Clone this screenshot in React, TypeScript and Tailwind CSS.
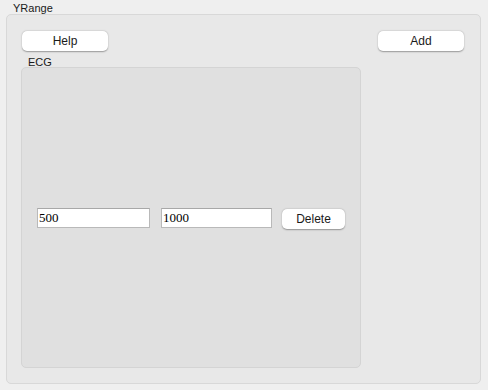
import React from "react";

const Button = ({ label, className = "" }: { label: string; className?: string }) => (
  <button
    className={`h-[20px] rounded-[5px] bg-white text-[12px] leading-[20px] text-[#1a1a1a] shadow-[0_0.5px_1.5px_rgba(0,0,0,0.35)] ${className}`}
    style={{ fontFamily: '"Liberation Sans", Arial, sans-serif' }}
  >
    {label}
  </button>
);

const Field = ({ value, className = "" }: { value: string; className?: string }) => (
  <input
    defaultValue={value}
    className={`h-[20px] border border-[#b9b9b9] border-t-[#a8a8a8] bg-white px-[1px] text-[13px] text-black outline-none ${className}`}
    style={{ fontFamily: '"Liberation Serif", "Times New Roman", serif' }}
  />
);

export default function App() {
  return (
    <div
      className="h-[390px] w-[488px] bg-[#efefef] px-[6px] pt-[3px] text-[#1a1a1a]"
      style={{ fontFamily: '"Liberation Sans", Arial, sans-serif' }}
    >
      <div className="ml-[7px] h-[11px] text-[11px] leading-[11px]">YRange</div>
      <div className="flex h-[370px] w-[475px] rounded-[5px] border border-[#d8d8d8] bg-[#e8e8e8] pl-[14px] pt-[16px]">
        <div className="flex w-[340px] flex-col">
          <Button label="Help" className="ml-[1px] w-[86px]" />
          <div className="ml-[7px] mt-[6px] h-[10px] text-[11px] leading-[11px]">ECG</div>
          <div className="flex h-[301px] w-[340px] items-center rounded-[5px] border border-[#d4d4d4] bg-[#e0e0e0] pl-[15px] pt-[1px]">
            <Field value="500" className="w-[113px]" />
            <Field value="1000" className="ml-[11px] w-[111px]" />
            <Button label="Delete" className="ml-[10px] mt-[2px] w-[63px]" />
          </div>
        </div>
        <Button label="Add" className="ml-[17px] w-[86px]" />
      </div>
    </div>
  );
}
